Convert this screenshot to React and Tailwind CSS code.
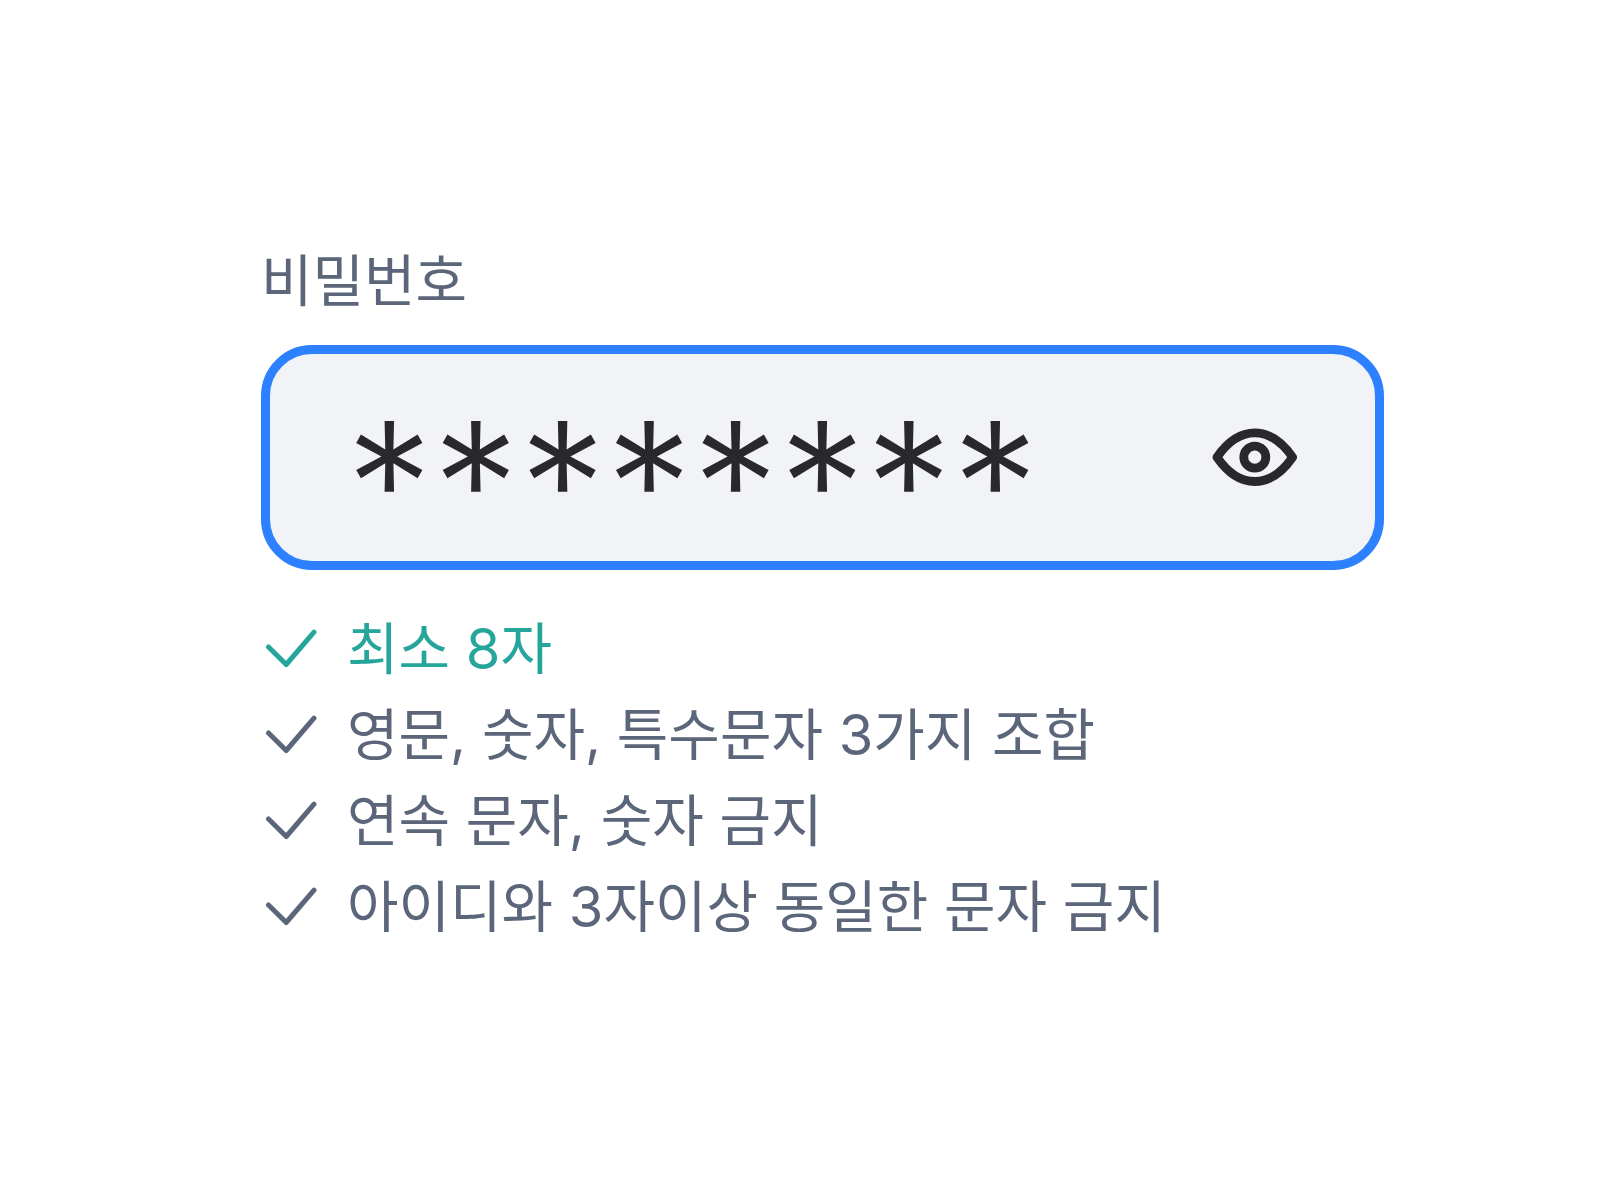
import { useState } from "react";

const RULES = [
  { id: "length", text: "최소 8자", passed: true },
  { id: "mix", text: "영문, 숫자, 특수문자 3가지 조합", passed: false },
  { id: "sequence", text: "연속 문자, 숫자 금지", passed: false },
  { id: "sameAsId", text: "아이디와 3자이상 동일한 문자 금지", passed: false },
];

function CheckIcon() {
  return (
    <svg
      className="h-14 w-14 shrink-0"
      viewBox="0 0 56 56"
      fill="none"
      stroke="currentColor"
      strokeWidth="5"
      strokeLinecap="round"
      strokeLinejoin="round"
      aria-hidden="true"
    >
      <path d="M7.5 26 25.2 43.5 53 11.2" />
    </svg>
  );
}

function EyeIcon() {
  return (
    <svg
      className="h-[60px] w-[88px]"
      viewBox="0 0 88 60"
      fill="none"
      stroke="currentColor"
      strokeWidth="8.8"
      strokeLinejoin="round"
      aria-hidden="true"
    >
      <path d="M6 29.2C15.5 15.4 28.5 4.9 43.8 4.9S72.1 15.4 81.6 29.2C72.1 43 59.1 53.5 43.8 53.5S15.5 43 6 29.2Z" />
      <circle cx="43.8" cy="29.2" r="11" />
    </svg>
  );
}

export default function App() {
  const [password, setPassword] = useState("********");

  return (
    <main className="min-h-screen bg-white pt-[238px] pr-[216px] pl-[261px] font-['Inter','Noto_Sans_CJK_KR',sans-serif] text-[56px] leading-[86px] text-[#5c667b]">
      <label htmlFor="password" className="block">
        비밀번호
      </label>

      <div className="mt-[21px] flex h-[225px] items-center rounded-[51px] border-9 border-[#2d80ff] bg-[#f1f3f7] px-[76px] text-[#29282d]">
        <input
          id="password"
          type="text"
          value={password}
          onChange={(e) => setPassword(e.target.value)}
          className="h-full min-w-0 flex-1 bg-transparent pt-[52px] text-[173px] font-light outline-none"
        />
        <button type="button" aria-label="비밀번호 보기">
          <EyeIcon />
        </button>
      </div>

      {/* 비밀번호 규칙 */}
      <ul className="mt-9">
        {RULES.map((rule) => (
          <li key={rule.id} className={rule.passed ? "flex items-center gap-[30px] text-[#26a69a]" : "flex items-center gap-[30px]"}>
            <CheckIcon />
            <span>{rule.text}</span>
          </li>
        ))}
      </ul>
    </main>
  );
}
